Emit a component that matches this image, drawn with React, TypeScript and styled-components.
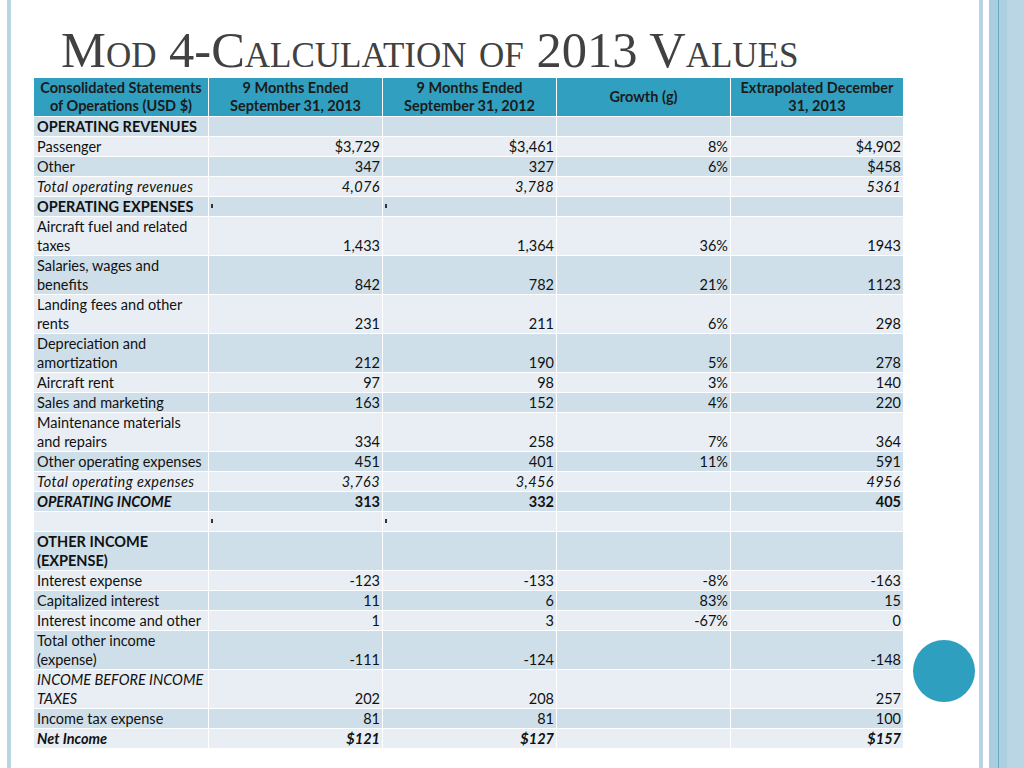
import React from "react";
import styled, { createGlobalStyle } from "styled-components";

const Global = createGlobalStyle`
  html, body { margin: 0; padding: 0; background: #ffffff; }
  #root { width: 1024px; height: 768px; overflow: hidden; }
`;

const Slide = styled.div`
  position: relative;
  display: flex;
  width: 1024px;
  height: 768px;
  background: #ffffff;
  overflow: hidden;
`;

const LeftStripe = styled.div`
  margin-left: 7px;
  width: 4px;
  flex: none;
  background: #b9d4e3;
`;

const Content = styled.div`
  flex: 1;
  display: flex;
  flex-direction: column;
  padding-top: 24px;
  min-width: 0;
`;

const Title = styled.h1`
  margin: 0 0 2px 50px;
  height: 52px;
  font-family: "Liberation Serif", "DejaVu Serif", serif;
  font-weight: normal;
  font-size: 50.5px;
  line-height: 52px;
  font-variant: small-caps;
  letter-spacing: 0;
  color: #414141;
  white-space: nowrap;
`;

const Table = styled.table`
  margin-left: 22px;
  width: 870px;
  border-collapse: collapse;
  table-layout: fixed;
  font-family: Lato, "Open Sans", sans-serif;
  font-size: 14.5px;
  color: #111111;
`;

const HeadCell = styled.th`
  height: 36px;
  padding: 1px 3px;
  background: #31a0c0;
  border: 1px solid #ffffff;
  border-top: none;
  font-weight: bold;
  line-height: 18px;
  text-align: center;
  vertical-align: middle;
  color: #1b1b1b;
`;

const Row = styled.tr<{ $dark: boolean }>`
  background: ${(p) => (p.$dark ? "#cfdfe9" : "#e8eef4")};
`;

const Cell = styled.td<{ $bold?: boolean; $italic?: boolean; $label?: boolean; $spaced?: boolean }>`
  padding: 0 ${(p) => (p.$label ? "1px" : "2px")} 0 3px;
  border: 1px solid #ffffff;
  line-height: 19px;
  vertical-align: bottom;
  text-align: ${(p) => (p.$label ? "left" : "right")};
  font-weight: ${(p) => (p.$bold ? "bold" : "normal")};
  font-style: ${(p) => (p.$italic ? "italic" : "normal")};
  letter-spacing: ${(p) => (p.$spaced ? "0.4px" : "0")};
  white-space: nowrap;
`;

const TickCell = styled.td`
  padding: 0 0 0 2px;
  border: 1px solid #ffffff;
  line-height: 19px;
  vertical-align: middle;
  text-align: left;
`;

const Tick = styled.span`
  display: inline-block;
  width: 1.5px;
  height: 4px;
  margin-bottom: 5px;
  background: #333333;
  vertical-align: middle;
`;

const RightStripes = styled.div`
  display: flex;
  flex: none;
  width: 45px;
  height: 100%;
`;

const Stripe = styled.div<{ $w: number; $c: string }>`
  width: ${(p) => p.$w}px;
  flex: none;
  background: ${(p) => p.$c};
`;

const Dot = styled.div`
  position: absolute;
  left: 913px;
  top: 640px;
  width: 62px;
  height: 62px;
  border-radius: 50%;
  background: #2f9fbf;
`;

type RowData = {
  label: React.ReactNode;
  vals?: string[];
  labelBold?: boolean;
  labelItalic?: boolean;
  valBold?: boolean;
  valItalic?: boolean;
  spaced?: boolean;
  ticks?: boolean;
};

const rows: RowData[] = [
  { label: "OPERATING REVENUES", labelBold: true, vals: ["", "", "", ""] },
  { label: "Passenger", vals: ["$3,729", "$3,461", "8%", "$4,902"] },
  { label: "Other", vals: ["347", "327", "6%", "$458"] },
  { label: "Total operating revenues", labelItalic: true, valItalic: true, spaced: true, vals: ["4,076", "3,788", "", "5361"] },
  { label: "OPERATING EXPENSES", labelBold: true, ticks: true },
  { label: <>Aircraft fuel and related<br />taxes</>, vals: ["1,433", "1,364", "36%", "1943"] },
  { label: <>Salaries, wages and<br />benefits</>, vals: ["842", "782", "21%", "1123"] },
  { label: <>Landing fees and other<br />rents</>, vals: ["231", "211", "6%", "298"] },
  { label: <>Depreciation and<br />amortization</>, vals: ["212", "190", "5%", "278"] },
  { label: "Aircraft rent", vals: ["97", "98", "3%", "140"] },
  { label: "Sales and marketing", vals: ["163", "152", "4%", "220"] },
  { label: <>Maintenance materials<br />and repairs</>, vals: ["334", "258", "7%", "364"] },
  { label: "Other operating expenses", vals: ["451", "401", "11%", "591"] },
  { label: "Total operating expenses", labelItalic: true, valItalic: true, spaced: true, vals: ["3,763", "3,456", "", "4956"] },
  { label: "OPERATING INCOME", labelBold: true, labelItalic: true, valBold: true, vals: ["313", "332", "", "405"] },
  { label: "", ticks: true },
  { label: <>OTHER INCOME<br />(EXPENSE)</>, labelBold: true, vals: ["", "", "", ""] },
  { label: "Interest expense", vals: ["-123", "-133", "-8%", "-163"] },
  { label: "Capitalized interest", vals: ["11", "6", "83%", "15"] },
  { label: "Interest income and other", vals: ["1", "3", "-67%", "0"] },
  { label: <>Total other income<br />(expense)</>, vals: ["-111", "-124", "", "-148"] },
  { label: <>INCOME BEFORE INCOME<br />TAXES</>, labelItalic: true, vals: ["202", "208", "", "257"] },
  { label: "Income tax expense", vals: ["81", "81", "", "100"] },
  { label: "Net Income", labelBold: true, labelItalic: true, valBold: true, valItalic: true, vals: ["$121", "$127", "", "$157"] },
];

const headers: React.ReactNode[] = [
  <>Consolidated Statements<br />of Operations (USD $)</>,
  <>9 Months Ended<br />September 31, 2013</>,
  <>9 Months Ended<br />September 31, 2012</>,
  <>Growth (g)</>,
  <>Extrapolated December<br />31, 2013</>,
];

const stripes: { w: number; c: string }[] = [
  { w: 4, c: "#b8d3e2" },
  { w: 6, c: "#ffffff" },
  { w: 9, c: "#a9cee0" },
  { w: 1, c: "#6aa7c5" },
  { w: 8, c: "#adcfe0" },
  { w: 17, c: "#bad6e4" },
];

export default function App() {
  return (
    <>
      <Global />
      <Slide>
        <LeftStripe />
        <Content>
          <Title>Mod 4-Calculation of 2013 Values</Title>
          <Table>
            <colgroup>
              <col style={{ width: 175 }} />
              <col style={{ width: 174 }} />
              <col style={{ width: 174 }} />
              <col style={{ width: 174 }} />
              <col style={{ width: 173 }} />
            </colgroup>
            <thead>
              <tr>
                {headers.map((h, i) => (
                  <HeadCell key={i}>{h}</HeadCell>
                ))}
              </tr>
            </thead>
            <tbody>
              {rows.map((r, i) => (
                <Row key={i} $dark={i % 2 === 0}>
                  <Cell $label $bold={r.labelBold} $italic={r.labelItalic} $spaced={r.spaced}>
                    {r.label || "\u00a0"}
                  </Cell>
                  {r.ticks ? (
                    <>
                      <TickCell><Tick /></TickCell>
                      <TickCell><Tick /></TickCell>
                      <Cell />
                      <Cell />
                    </>
                  ) : (
                    (r.vals ?? ["", "", "", ""]).map((v, j) => (
                      <Cell key={j} $bold={r.valBold} $italic={r.valItalic} $spaced={r.spaced}>
                        {v}
                      </Cell>
                    ))
                  )}
                </Row>
              ))}
            </tbody>
          </Table>
        </Content>
        <RightStripes>
          {stripes.map((s, i) => (
            <Stripe key={i} $w={s.w} $c={s.c} />
          ))}
        </RightStripes>
        <Dot />
      </Slide>
    </>
  );
}
